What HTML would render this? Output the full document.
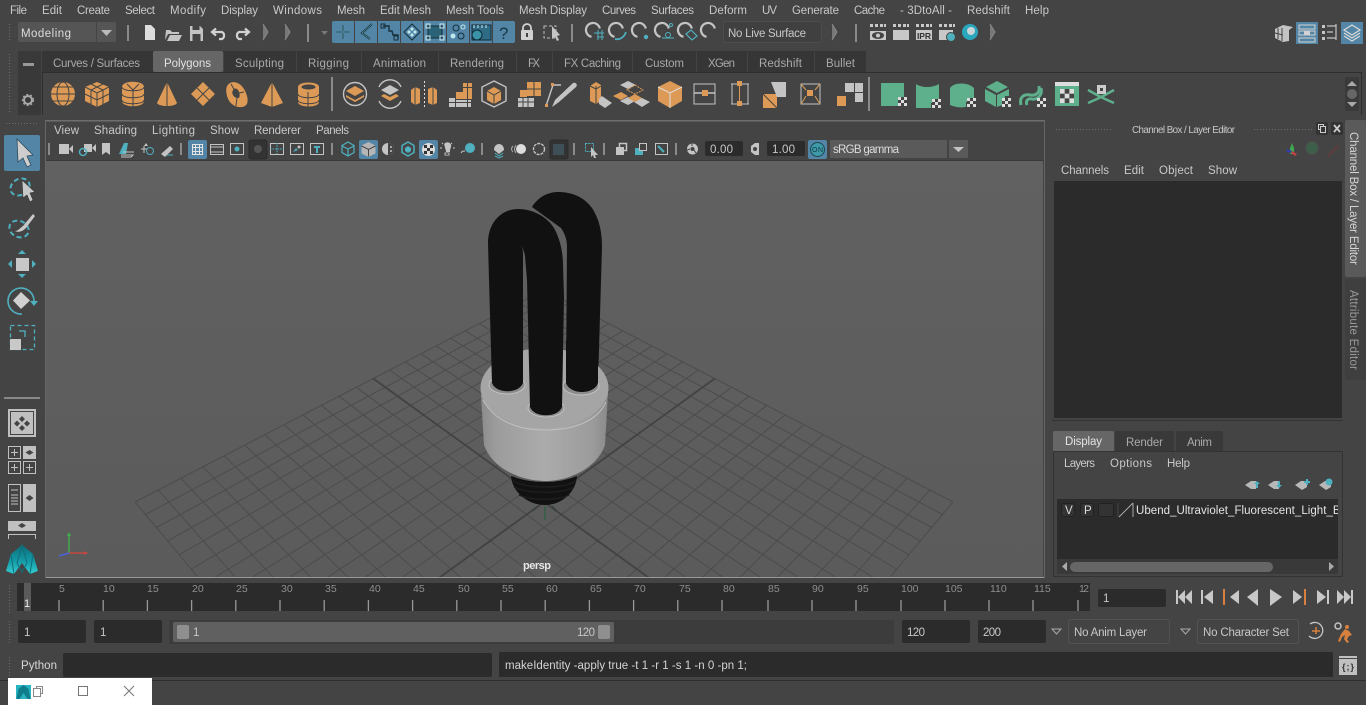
<!DOCTYPE html>
<html><head><meta charset="utf-8"><title>Maya</title>
<style>
html,body{margin:0;padding:0;background:#444;overflow:hidden;width:1366px;height:705px}
#r{width:1366px;height:705px;overflow:hidden;position:relative}
svg{display:block}
text{font-family:"Liberation Sans",sans-serif;font-size:11.5px;fill:#c8c8c8}
.t{fill:#a9a9a9}
.s{font-size:10.5px;fill:#8e8e8e}
.o{fill:#dc9a56}
.k{fill:none;stroke:#444;stroke-width:1}
.w{fill:none;stroke:#c4c4c4;stroke-width:1.4}
.c{fill:none;stroke:#4fb0bf;stroke-width:1.6}
.gn{fill:#5eb08c}
.g{fill:#c4c4c4}
.b{fill:#5285a6}
.sep{fill:#8a8a8a}
.d{fill:#2b2b2b}
</style></head><body><div id="r">
<svg width="1366" height="705" viewBox="0 0 1366 705" xmlns="http://www.w3.org/2000/svg">
<defs>
<clipPath id="vp"><rect x="46" y="161" width="997" height="416"/></clipPath>
<clipPath id="ll"><rect x="1057" y="499" width="281" height="60"/></clipPath>
<linearGradient id="body" x1="0" x2="1" y1="0" y2="0"><stop offset="0" stop-color="#8c8c8c"/><stop offset=".12" stop-color="#9c9c9c"/><stop offset=".5" stop-color="#ababab"/><stop offset=".88" stop-color="#9b9b9b"/><stop offset="1" stop-color="#8a8a8a"/></linearGradient>
<linearGradient id="vbg" x1="0" x2="0" y1="0" y2="1"><stop offset="0" stop-color="#616161"/><stop offset="1" stop-color="#5b5b5b"/></linearGradient>
<linearGradient id="logo" x1="0" x2="0" y1="0" y2="1"><stop offset="0" stop-color="#0c6e7a"/><stop offset=".55" stop-color="#149aa6"/><stop offset="1" stop-color="#35ccd2"/></linearGradient>
<pattern id="dots" width="3" height="3" patternUnits="userSpaceOnUse"><rect width="1" height="1" fill="#6d6d6d"/></pattern>
<g id="chk"><rect width="9" height="9" fill="#444"/><rect width="3" height="3" fill="#ddd"/><rect x="6" width="3" height="3" fill="#ddd"/><rect x="3" y="3" width="3" height="3" fill="#ddd"/><rect y="6" width="3" height="3" fill="#ddd"/><rect x="6" y="6" width="3" height="3" fill="#ddd"/></g>
<path id="gridA" fill="none" stroke="#4c4c4c" stroke-width="1" d="M135 502L544 290M145.500 514.500L556.400 296.400M156.400 527.500L569 302.900M167.600 540.900L582 309.700M179.200 554.700L595.300 316.600M191.300 569.100L609 323.600M210.300 580L622.900 330.900M247.900 580L637.300 338.300M285.500 580L652 345.900M323.300 580L667.100 353.800M360.900 580L682.600 361.800M398.400 580L698.500 370M473.700 580L731.600 387.200M511.300 580L748.900 396.200M548.900 580L766.700 405.400M586.600 580L785 414.900M624.200 580L803.800 424.700M661.800 580L823.200 434.700M699.500 580L843.200 445.100M737.100 580L863.800 455.800M774.700 580L885.100 466.800M812.300 580L907 478.100M850.100 580L929.600 490.100M887.600 580L953 502"/>
<path id="gridB" fill="none" stroke="#424242" stroke-width="1.800" d="M436.100 580L714.800 378.500"/>
<g id="mag"><path d="M-1.500 6.800A7 7 0 1 1 6.800 -1.500" fill="none" stroke="#c4c4c4" stroke-width="2.200"/></g>
<g id="coll"><path d="M0 -8L5 0L0 8" fill="#777" stroke="#8a8a8a"/></g>
</defs>

<rect width="1366" height="705" fill="#444"/>

<!-- menu bar -->
<text x="10" y="14" textLength="17">File</text>
<text x="42" y="14" textLength="20">Edit</text>
<text x="77" y="14" textLength="33">Create</text>
<text x="125" y="14" textLength="30">Select</text>
<text x="170" y="14" textLength="36">Modify</text>
<text x="221" y="14" textLength="37">Display</text>
<text x="273" y="14" textLength="49">Windows</text>
<text x="337" y="14" textLength="28">Mesh</text>
<text x="380" y="14" textLength="51">Edit Mesh</text>
<text x="446" y="14" textLength="58">Mesh Tools</text>
<text x="519" y="14" textLength="68">Mesh Display</text>
<text x="602" y="14" textLength="34">Curves</text>
<text x="651" y="14" textLength="43">Surfaces</text>
<text x="709" y="14" textLength="38">Deform</text>
<text x="762" y="14" textLength="15">UV</text>
<text x="792" y="14" textLength="47">Generate</text>
<text x="854" y="14" textLength="31">Cache</text>
<text x="900" y="14" textLength="52">- 3DtoAll -</text>
<text x="967" y="14" textLength="43">Redshift</text>
<text x="1025" y="14" textLength="24">Help</text>

<!-- status line -->
<rect x="7" y="23" width="5" height="19" fill="url(#dots)"/>
<rect x="18" y="22" width="98" height="20" rx="2" fill="#555"/>
<rect x="96" y="22" width="1" height="20" fill="#444"/>
<text x="21" y="37" style="fill:#dcdcdc" textLength="50">Modeling</text>
<path d="M101 30h11l-5.500 6z" fill="#bbb"/>
<rect x="127" y="25" width="2" height="16" class="sep"/>
<path d="M145 25h6l4 4v11h-10z" style="fill:#ddd"/>
<path d="M166 30h4l2 2h7v2h-11l-3 6zM170 35h12l-3 6h-12z" class="g"/>
<path d="M190 26h10l3 3v12h-13zM192.500 26v4h7v-4M192.500 34h8v7h-8z" class="g" fill-rule="evenodd"/>
<path d="M213 32h9a4 4 0 0 1 0 7h-3M216 28.500l-4 3.500 4 3.500" fill="none" stroke="#d2d2d2" stroke-width="2.200"/>
<path d="M248 32h-9a4 4 0 0 0 0 7h3M245 28.500l4 3.500-4 3.500" fill="none" stroke="#d2d2d2" stroke-width="2.200"/>
<use href="#coll" x="263" y="32"/><use href="#coll" x="285" y="32"/>
<rect x="307" y="24" width="2" height="18" class="sep"/>
<path d="M321 31h7l-3.500 4z" fill="#777"/>
<!-- blue mask buttons -->
<rect x="332" y="21" width="183" height="22" rx="2" class="b"/>
<path d="M354.500 21v22M377.500 21v22M400.500 21v22M423.500 21v22M446.500 21v22M469.500 21v22M492.500 21v22" stroke="#444" stroke-width="1"/>
<path d="M343 25v14M336 32h14" stroke="#14323f" stroke-width="1.600"/><path d="M343 25v14M336 32h14" stroke="#8adbe5" stroke-width=".5"/>
<path d="M372 24l-10 9 8 6" fill="none" stroke="#16303c" stroke-width="2"/><path d="M372 24l-10 9 8 6" fill="none" stroke="#8adbe5" stroke-width=".5"/>
<path d="M383 26h6v5h3l1 4h5v4" fill="none" stroke="#16303c" stroke-width="1.400"/><rect x="381" y="24" width="4" height="4" fill="none" stroke="#16303c"/><rect x="394" y="36" width="4" height="4" fill="none" stroke="#16303c"/>
<path d="M412 24l8 8-8 8-8-8z" fill="none" stroke="#16303c"/><path d="M412 27l2 2-2 2-2-2zM412 33l2 2-2 2-2-2zM409 30l2 2-2 2-2-2zM415 30l2 2-2 2-2-2z" fill="#bfe8ee"/>
<rect x="428" y="26" width="14" height="12" fill="#2c6278" stroke="#102a35"/><path d="M426 24h4v4h-4zM440 24h4v4h-4zM426 36h4v4h-4zM440 36h4v4h-4z" fill="none" stroke="#cfeaf0"/>
<circle cx="456" cy="28" r="3" fill="none" stroke="#16303c"/><circle cx="461" cy="36" r="3" fill="none" stroke="#16303c"/><circle cx="453" cy="36" r="2.500" fill="#bfe8ee"/><circle cx="463" cy="27" r="2" fill="none" stroke="#bfe8ee"/>
<rect x="472" y="25" width="19" height="15" fill="#2f6b85" stroke="#102a35"/><circle cx="477" cy="35" r="5" fill="#3b93a8" stroke="#102a35"/><path d="M474 25v3M478 25v3M482 25v3M486 25v3" stroke="#cfeaf0"/>
<text x="499" y="39" style="font-size:17px;fill:#173845" textLength="10">?</text>
<path d="M523 31v-3a4 4 0 0 1 8 0v3" fill="none" stroke="#d2d2d2" stroke-width="1.800"/><rect x="521" y="30" width="12" height="10" rx="1" fill="#d2d2d2"/><rect x="526" y="33" width="2" height="4" fill="#444"/>
<rect x="544" y="26" width="12" height="12" fill="none" stroke="#bbb" stroke-dasharray="3 2"/><path d="M552 26l8 9-3 1 2 4-2 1-2-4-3 2z" fill="#c4c4c4"/>
<rect x="571" y="24" width="2" height="18" class="sep"/>
<use href="#mag" x="593" y="30"/><path d="M594 33h10M597 37h7M598 30v10M602 30v10" stroke="#4fb0bf" stroke-width="1"/>
<use href="#mag" x="616" y="30"/><path d="M615 39c4 1 9-1 11-7" fill="none" stroke="#4fb0bf" stroke-width="1.800"/>
<use href="#mag" x="639" y="30"/><circle cx="646" cy="37" r="2.200" fill="#4fb0bf"/>
<use href="#mag" x="662" y="30"/><circle cx="668" cy="35" r="2.500" fill="none" stroke="#4fb0bf"/><circle cx="671" cy="25" r="1.500" fill="none" stroke="#4fb0bf"/><path d="M662 38h12" stroke="#4fb0bf"/>
<use href="#mag" x="685" y="30"/><path d="M686 34l5-4 6 6-5 4z" fill="none" stroke="#4fb0bf" stroke-width="1.200"/>
<use href="#mag" x="708" y="30"/>
<rect x="723.500" y="21.500" width="98" height="21" rx="2" fill="#404040" stroke="#4d4d4d"/>
<text x="728" y="37" textLength="78">No Live Surface</text>
<use href="#coll" x="832" y="32"/>
<rect x="855" y="24" width="2" height="18" class="sep"/>
<!-- render icons -->
<g fill="#c8c8c8">
<path d="M870 31h16v9h-16z"/><path d="M870 24h3v3h-3zM875 24h3v3h-3zM880 24h3v3h-3zM884 24h2v3h-2zM893 24h3v3h-3zM898 24h3v3h-3zM903 24h3v3h-3zM907 24h2v3h-2zM916 24h3v3h-3zM921 24h3v3h-3zM926 24h3v3h-3zM930 24h2v3h-2zM939 24h3v3h-3zM944 24h3v3h-3zM949 24h3v3h-3zM953 24h2v3h-2z"/>
<rect x="893" y="30" width="16" height="10"/><rect x="916" y="30" width="16" height="10"/><rect x="939" y="30" width="14" height="10"/>
</g>
<ellipse cx="878" cy="35.500" rx="6" ry="3.500" fill="#444"/><circle cx="878" cy="35.500" r="2" fill="#c8c8c8"/>
<text x="917" y="39" style="font-size:8.500px;fill:#333;font-weight:bold" textLength="14">IPR</text>
<circle cx="951" cy="37" r="4.500" fill="#4fb0bf" stroke="#444"/>
<circle cx="970" cy="32" r="8" fill="#2aa6bd"/><circle cx="971" cy="31" r="4" fill="#c8d4d6"/>
<use href="#coll" x="990" y="32"/>
<!-- right workspace icons -->
<g fill="#c4c4c4"><path d="M1275 29l8-4 10 2-4 3v11l-6 1-8-4z"/></g><path d="M1278 28v11M1282 28v13M1275 33l8 2" stroke="#444"/>
<rect x="1296" y="22" width="22" height="22" class="b"/><path d="M1299 25h16v4h-16zM1299 31h16v4h-16zM1299 38h16v4h-16z" fill="none" stroke="#d2d2d2"/><rect x="1304" y="31" width="6" height="4" fill="#d2d2d2"/>
<path d="M1322 25h3v3h-3zM1322 31h3v3h-3zM1322 37h3v3h-3z" fill="#c4c4c4"/><path d="M1327 26h9M1327 32h6M1327 38h9M1336 24v16" stroke="#c4c4c4" stroke-width="1.200"/>
<rect x="1341" y="22" width="22" height="22" class="b"/><path d="M1352 25l8 5-8 5-8-5zM1344 33l8 5 8-5M1344 36l8 5 8-5" fill="none" stroke="#d8d8d8" stroke-width="1.300"/>

<!-- tabs/shelf -->
<rect x="7" y="52" width="5" height="60" fill="url(#dots)"/>
<rect x="18" y="51" width="23" height="64" fill="#393939"/>
<rect x="23" y="63" width="11" height="3" fill="#999"/>
<circle cx="28" cy="100" r="4" fill="none" stroke="#aaa" stroke-width="2"/><circle cx="28" cy="100" r="5.500" fill="none" stroke="#aaa" stroke-width="1.200" stroke-dasharray="2 2"/>
<rect x="42" y="51" width="824" height="21" fill="#363636"/>
<rect x="153" y="51" width="70" height="21" rx="2" fill="#666"/>
<path d="M296.500 52v20M361.500 52v20M438.500 52v20M516.500 52v20M552.500 52v20M632.500 52v20M696.500 52v20M747.500 52v20M814.500 52v20M223.500 52v20" stroke="#444"/>
<rect x="42" y="72" width="1320" height="1" fill="#2e2e2e"/>
<rect x="42" y="72" width="1" height="43" fill="#2e2e2e"/>
<rect x="1361" y="72" width="1" height="43" fill="#2e2e2e"/>
<text class="t" x="53" y="67" textLength="87">Curves / Surfaces</text>
<text x="164" y="67" textLength="47" style="fill:#e2e2e2">Polygons</text>
<text class="t" x="235" y="67" textLength="49">Sculpting</text>
<text class="t" x="308" y="67" textLength="41">Rigging</text>
<text class="t" x="373" y="67" textLength="53">Animation</text>
<text class="t" x="450" y="67" textLength="54">Rendering</text>
<text class="t" x="528" y="67" textLength="12">FX</text>
<text class="t" x="564" y="67" textLength="57">FX Caching</text>
<text class="t" x="645" y="67" textLength="39">Custom</text>
<text class="t" x="708" y="67" textLength="27">XGen</text>
<text class="t" x="759" y="67" textLength="43">Redshift</text>
<text class="t" x="826" y="67" textLength="29">Bullet</text>

<!-- shelf polygons -->
<g>
<circle class="o" cx="63" cy="94" r="12"/><path class="k" d="M51 94h24M53 87h20M53 101h20"/><ellipse class="k" cx="63" cy="94" rx="6" ry="12"/>
<path class="o" d="M97 82l12 5v14l-12 6-12-6V87z"/><path class="k" d="M85 87l12 6 12-6M97 93v14M91 84l12 6v14M103 84l-12 6v14M85 94l12 6 12-6"/>
<path class="o" d="M122 87c0-7 22-7 22 0v14c0 7-22 7-22 0z"/><path class="k" d="M122 87c0 5 22 5 22 0M122 94c0 5 22 5 22 0M122 100c0 5 22 5 22 0M133 90v17M127 84l6 6 6-6"/>
<path class="o" d="M167 82l10 21c-2 4-18 4-20 0z"/><path class="k" d="M167 82v24"/>
<path class="o" d="M203 82l12 12-12 12-12-12z"/><path class="k" d="M197 88l12 12M209 88l-12 12"/>
<path class="o" d="M230 83c6-3 13 2 16 10s2 13-4 14-13-3-15-11 0-11 3-13z"/><path d="M233 90c2-3 5-1 6 2s1 6-1 6-4-1-5-3-1-3 0-5z" fill="#444"/><path class="k" d="M231 84l4 7M244 92l-5 1M236 106l1-8"/>
<path class="o" d="M272 82l11 21-11 4-11-4z"/><path class="k" d="M272 82v25"/>
<path class="o" d="M298 87c0-6 21-6 21 0v15c0 6-21 6-21 0z"/><ellipse cx="308.500" cy="87" rx="7" ry="2.500" fill="#444"/><path class="k" d="M298 94c0 5 21 5 21 0M298 100c0 5 21 5 21 0M308 92v16"/>
<rect x="331" y="77" width="2" height="34" class="sep"/>
<circle class="w" cx="355" cy="94" r="11.500"/><path class="o" d="M355 86l9 5-9 5-9-5z"/><path class="o" d="M346 95l9 5 9-5v2l-9 5-9-5z"/>
<path class="w" d="M379 87a12 12 0 0 1 22 0M379 101a12 12 0 0 0 22 0"/><path class="g" d="M390 85l9 5-9 5-9-5z"/><path class="o" d="M381 96l9 5 9-5-3-2-6 3-6-3z"/>
<path class="o" d="M411 90l4-3 5 2v14l-5 2-4-3zM428 89l5-2 4 3v13l-4 2-5-2z"/><path class="k" d="M415 87v18M433 87v18"/><path d="M424.500 81v28" stroke="#ddd" stroke-dasharray="2 2"/>
<path class="o" d="M463 83h9v9h-9zM456 92h7v7h-7zM463 92h9v7h-9z"/><path class="g" d="M449 98h6v9h-6zM456 100h7v7h-7zM463 100h8v7h-8z"/><path class="k" d="M467.500 83v24M463 87.500h9M449 102.500h22"/>
<path class="w" d="M494 81l12 6v14l-12 6-12-6V87z"/><path class="o" d="M494 87l7 4v9l-7 4-7-4v-9z"/><path class="k" d="M487 91l7 4 7-4M494 95v9"/>
<path class="o" d="M527 82h7v7h-7zM534 82h7v7h-7zM527 89h7v7h-7zM534 89h7v7h-7zM520 90h7v7h-7z"/><path class="k" d="M534 82v14M527 89h14"/><path class="g" d="M518 98h16v9h-16z"/><path class="k" d="M523 98v9M528 98v9M518 102h16"/>
<path class="w" d="M553 85l-7 21M553 85h8"/><rect class="o" x="551" y="83" width="3" height="3"/><rect class="o" x="545" y="104" width="3" height="3"/><path class="g" d="M559 102l-7 5 3-7 18-17c3-1 5 2 3 4z"/>
<path class="o" d="M590 86l6-4 5 3v16l-5 3-6-3z"/><path class="g" d="M602 96l10 7-7 5-6-4v-5z"/><path class="k" d="M596 86v18M590 86l6 3 5-3"/>
<path class="g" d="M628 81l8 4-8 4-8-4zM642 98l8 4-8 5-8-5zM628 97l7 4-7 4-8-4z"/><path class="o" d="M635 94l7 4-7 4-7-4zM621 92l7 4-7 4-8-4z"/><path d="M635 85l8 5-8 4-8-4z" fill="none" stroke="#dc9a56" stroke-dasharray="2 1"/>
<path class="o" d="M670 81l12 6v14l-12 7-12-7V87z"/><path d="M658 87l12 6 12-6M670 93v15" fill="none" stroke="#ddd"/>
<rect class="w" x="694" y="84" width="21" height="20" style="stroke-width:1"/><rect class="o" x="702" y="90" width="6" height="6"/><path class="w" d="M694 93h8M708 93h7"/>
<path class="w" d="M731 84h18M731 104h18M732 84v20M748 84v20" style="stroke-width:1"/><rect class="o" x="737" y="81" width="5" height="5"/><rect class="o" x="737" y="101" width="5" height="5"/><path d="M739.500 86v15" stroke="#dc9a56"/>
<path class="o" d="M763 94h14v14h-14z"/><path class="k" d="M763 94l14 14"/><path class="g" d="M771 82h15v15h-9z"/>
<rect class="w" x="801" y="84" width="19" height="20" style="stroke-width:1"/><rect class="o" x="807" y="90" width="6" height="6"/><path class="o" d="M801 84l5 6M820 84l-5 6M801 104l5-8M820 104l-5-8" style="stroke:#dc9a56"/>
<path class="g" d="M845 83h9v9h-9zM855 83h8v9h-8zM855 93h8v9h-8z"/><path class="o" d="M837 96h9v10h-9z"/>
<rect x="868" y="77" width="2" height="34" class="sep"/>
<!-- green shelf -->
<path class="gn" d="M881 83h23v19h-6v4h-17z"/>
<use href="#chk" x="898" y="97"/>
<path class="gn" d="M916 84c6 4 16 4 23 0v19h-8v5h-15z"/><use href="#chk" x="932" y="99"/>
<path class="gn" d="M950 88c4-6 18-6 24 0v14h-8v5c-6 1-11 0-16-2z"/><use href="#chk" x="967" y="98"/>
<path class="gn" d="M997 81l11 6-11 6-11-6zM985 89l11 6v12l-11-6zM1009 89v7h-4v8l-8 3V95z"/><use href="#chk" x="1002" y="98"/>
<path d="M1021 105c-2-8 3-11 9-10s10-2 9-9M1027 105c-2-5 2-7 5-6s11-2 9-11" fill="none" stroke="#5eb08c" stroke-width="3"/><use href="#chk" x="1037" y="98"/>
<rect class="gn" x="1055" y="82" width="24" height="24"/><rect x="1055" y="82" width="24" height="4" fill="#ddd"/><g transform="translate(1060,89) scale(1.560)"><use href="#chk"/></g>
<path d="M1088 90l9 5 4 2 4-2 9-5M1088 103l9-4 4-2 4 2 9 4" fill="none" stroke="#5eb08c" stroke-width="2.500"/><rect x="1097" y="85" width="9" height="9" fill="#ccc"/><rect x="1100" y="88" width="3" height="3" fill="#444"/>
<rect x="1345" y="77" width="14" height="34" fill="#3a3a3a"/><path d="M1347 86l5-5 5 5z" fill="#aaa"/><ellipse cx="1352" cy="94" rx="5" ry="5" fill="#666"/><path d="M1347 102l5 5 5-5z" fill="#aaa"/>
</g>

<!-- left toolbar -->
<rect x="4" y="123" width="35" height="3" fill="url(#dots)"/>
<rect x="4" y="135" width="36" height="36" rx="2" class="b"/>
<path d="M17 139l16 16-6 1 4 9-4 2-4-9-5 4z" fill="#cdcdcd" stroke="#2f4a5c" stroke-width=".8"/>
<ellipse cx="20" cy="187" rx="10" ry="8" transform="rotate(-30 20 187)" fill="none" stroke="#4fb0bf" stroke-width="2" stroke-dasharray="5 3"/>
<path d="M22 180l13 12-5 1 3 7-3 2-3-7-4 3z" fill="#c8c8c8" stroke="#333" stroke-width=".6"/>
<ellipse cx="19" cy="229" rx="10" ry="8" transform="rotate(25 19 229)" fill="none" stroke="#4fb0bf" stroke-width="2" stroke-dasharray="5 3"/>
<path d="M15 231c3 0 5-3 8-5l10-12 2 2-9 12c-3 3-7 5-11 3z" fill="#c8c8c8"/>
<rect x="16" y="258" width="13" height="13" fill="#c8c8c8"/><path d="M22 250l4 4h-8zM22 278l4-4h-8zM8 264l4-4v8zM36 264l-4-4v8z" fill="#4fb0bf"/>
<path d="M21 292l9 8.500-9 8.500-8-8.500z" fill="#d0d0d0"/>
<path d="M22 314A13 13 0 1 1 34 301" fill="none" stroke="#4fb0bf" stroke-width="1.600"/><path d="M30 301h8l-4 5z" fill="#4fb0bf"/>
<rect x="10.500" y="325.500" width="24" height="24" fill="none" stroke="#4fb0bf" stroke-width="1.300" stroke-dasharray="4 3"/>
<rect x="10" y="339" width="11" height="11" fill="#c8c8c8"/><path d="M19 331h6v6" fill="none" stroke="#4fb0bf" stroke-width="1.300"/>
<rect x="4" y="397" width="36" height="2" fill="#888"/>
<rect x="8" y="409" width="28" height="28" fill="#c0c0c0"/><rect x="10.500" y="411.500" width="23" height="23" fill="none" stroke="#444"/>
<path d="M22 416l3 3-3 3-3-3zM22 425l3 3-3 3-3-3zM17 420.500l3 3-3 3-3-3zM27 420.500l3 3-3 3-3-3z" fill="#444"/>
<rect x="8.500" y="446.500" width="12" height="12" fill="none" stroke="#c0c0c0"/><rect x="23" y="446" width="13" height="13" fill="#c0c0c0"/><rect x="8.500" y="461.500" width="12" height="12" fill="none" stroke="#c0c0c0"/><rect x="23.500" y="461.500" width="12" height="12" fill="none" stroke="#c0c0c0"/>
<path d="M11 452.500h7M14.500 449v7M11 467.500h7M14.500 464v7M26 467.500h7M29.500 464v7" stroke="#c0c0c0"/><path d="M29.500 450l4 2.500-4 2.500-4-2.500z" fill="#444"/>
<rect x="8.500" y="484.500" width="12" height="27" fill="none" stroke="#c0c0c0"/><rect x="23" y="484" width="13" height="28" fill="#c0c0c0"/><path d="M11 490h7M11 495h7M11 498h7M11 501h7M11 504h7" stroke="#c0c0c0"/><path d="M29.500 495l4 3-4 3-4-3z" fill="#444"/>
<rect x="8" y="521" width="28" height="10" fill="#c0c0c0"/><path d="M22 523l4 2.500-4 2.500-4-2.500z" fill="#444"/>
<path d="M8.500 535v4M35.500 535v4M8 534.500h28" stroke="#c0c0c0"/>
<path d="M22 545L33 554L38 571L30 574L22 563L14 574L6 571L11 554Z" fill="url(#logo)"/><path d="M22 545L17 563L22 572L27 563ZM11 554L14 574M33 554L30 574" fill="none" stroke="#0f6f7a" stroke-width="1"/>

<!-- viewport -->
<rect x="45" y="120" width="999" height="458" fill="#444"/>
<rect x="45" y="120" width="999" height="1.500" fill="#6e6e6e"/>
<rect x="45" y="160" width="999" height="1" fill="#3a3a3a"/>
<text x="54" y="134" textLength="25">View</text>
<text x="94" y="134" textLength="43">Shading</text>
<text x="152" y="134" textLength="43">Lighting</text>
<text x="210" y="134" textLength="29">Show</text>
<text x="254" y="134" textLength="47">Renderer</text>
<text x="316" y="134" textLength="33">Panels</text>

<!-- panel toolbar -->
<g fill="#8a8a8a"><rect x="48" y="143" width="2" height="12"/><rect x="180" y="143" width="2" height="12"/><rect x="331" y="143" width="2" height="12"/><rect x="481" y="143" width="2" height="12"/><rect x="573" y="143" width="2" height="12"/><rect x="603" y="143" width="2" height="12"/><rect x="675" y="143" width="2" height="12"/></g>
<rect x="59" y="144" width="10" height="10" fill="#c4c4c4"/><path d="M69 149l4-4v8z" fill="#c4c4c4"/>
<rect x="84" y="144" width="8" height="8" fill="#c4c4c4"/><path d="M92 148l4-4v8z" fill="#c4c4c4"/><circle cx="83" cy="152" r="3.500" fill="none" stroke="#4fb0bf" stroke-width="1.500"/>
<path d="M102 143h8v12l-4-3-4 3z" fill="#c4c4c4"/>
<path d="M119 154l5-11h4l-2 11z" fill="#4fb0bf"/><path d="M121 155h12l-2 2h-10M123 152h11" fill="none" stroke="#c4c4c4"/>
<path d="M141 149h6M144 146v7" stroke="#c4c4c4"/><circle cx="150" cy="151" r="3.500" fill="none" stroke="#4fb0bf"/><path d="M146 143l-2 3h4z" fill="#c4c4c4"/>
<path d="M161 154l9-8 3 3-8 8z" fill="#c4c4c4"/><path d="M167 155h6" stroke="#4fb0bf"/>
<rect x="188" y="140" width="19" height="19" rx="2" class="b"/><rect x="192.500" y="144.500" width="10" height="10" fill="none" stroke="#e4e4e4"/><path d="M195.500 144v11M199.500 144v11M192 147.500h11M192 151.500h11" stroke="#e4e4e4"/>
<rect x="210.500" y="144.500" width="13" height="10" fill="none" stroke="#c4c4c4"/><path d="M210 147h14M210 152h14" stroke="#c4c4c4"/>
<rect x="230.500" y="143.500" width="13" height="11" fill="none" stroke="#c4c4c4"/><circle cx="237" cy="149" r="2.500" fill="#4fb0bf"/>
<rect x="249" y="140" width="18" height="19" rx="2" fill="#333" stroke="#2b2b2b"/><circle cx="258" cy="149" r="4" fill="#555"/>
<rect x="270.500" y="143.500" width="13" height="11" fill="none" stroke="#c4c4c4"/><path d="M270 149h14M277 143v11" stroke="#4fb0bf" stroke-dasharray="1.500 1"/>
<rect x="290.500" y="143.500" width="13" height="11" fill="none" stroke="#c4c4c4"/><path d="M293 152l3-4 2 2z" fill="#4fb0bf"/><circle cx="299" cy="147" r="1.500" fill="#c4c4c4"/>
<rect x="310.500" y="143.500" width="13" height="11" fill="none" stroke="#c4c4c4"/><path d="M314 146h6v2h-2v5h-2v-5h-2z" fill="#4fb0bf"/>
<path d="M348 142l6 3.500v7l-6 3.500-6-3.500v-7zM342 146l6 3 6-3M348 149v7" fill="none" stroke="#4fb0bf" stroke-width="1.200"/>
<rect x="359" y="140" width="19" height="19" rx="2" class="b"/><path d="M368.500 142l7 3.500v8l-7 3.500-7-3.500v-8z" fill="#b5b5b5"/><path d="M361.500 146l7 3.500 7-3.500M368.500 149.500v7" fill="none" stroke="#444"/>
<circle cx="388" cy="149" r="6" fill="#c4c4c4"/><path d="M388 143a6 6 0 0 1 0 12z" fill="#444"/><circle cx="391" cy="147" r="1" fill="#c4c4c4"/><circle cx="391" cy="151" r="1" fill="#c4c4c4"/>
<path d="M408 142l6 3.500v7l-6 3.500-6-3.500v-7z" fill="none" stroke="#4fb0bf" stroke-width="1.500"/><path d="M408 146l3 2v3l-3 2-3-2v-3z" fill="#4fb0bf"/>
<rect x="419" y="140" width="19" height="19" rx="2" class="b"/><circle cx="428.500" cy="149.500" r="6.500" fill="#ddd"/><path d="M424 145h3v3h-3zM430 145h3v3h-3zM427 148h3v3h-3zM424 151h3v3h-3zM430 151h3v3h-3z" fill="#333"/>
<path d="M445 143c4-2 7 1 6 4-.5 2-1 2-1 5h-4c0-3-1-3-1-5-1-2-1-3 0-4z" fill="#c4c4c4"/><path d="M445 153h4v2h-4zM440 148h2M453 148h2M442 143l1 1M452 143l-1 1" stroke="#c4c4c4"/>
<circle cx="470" cy="148" r="5" fill="#4fb0bf"/><path d="M461 153c1-2 2-2 4-2" stroke="#c4c4c4" fill="none"/>
<path d="M494 150c0-8 10-8 10 0l-5 4z" fill="#c4c4c4"/><path d="M495 153l4 3 4-3M495 156l4 2 4-2" stroke="#4fb0bf" fill="none"/>
<circle cx="521" cy="149" r="5" fill="#ddd"/><path d="M513 146c-2 2-2 4 0 6M516 145c-2 3-2 5 0 8" fill="none" stroke="#aaa"/>
<circle cx="539" cy="149" r="5.500" fill="none" stroke="#c4c4c4" stroke-dasharray="3 1" stroke-width="1.400"/>
<rect x="550" y="140" width="18" height="19" rx="2" fill="#333" stroke="#2b2b2b"/><rect x="553" y="144" width="11" height="11" fill="#3e4f57"/>
<rect x="585.500" y="143.500" width="8" height="8" fill="none" stroke="#4fb0bf" stroke-dasharray="2 1"/><path d="M591 147l7 8-3 0 1 3-2 0-1-3-2 2z" fill="#c4c4c4"/>
<path d="M616 147h8v8h-8z" fill="#c4c4c4"/><rect x="619.500" y="143.500" width="7" height="7" fill="none" stroke="#c4c4c4" stroke-width="1.500"/>
<rect x="635" y="148" width="8" height="7" fill="#4fb0bf"/><rect x="639.500" y="143.500" width="7" height="7" fill="#444" stroke="#c4c4c4"/>
<rect x="655.500" y="143.500" width="12" height="11" fill="none" stroke="#c4c4c4"/><path d="M658 146l6 6" stroke="#4fb0bf" stroke-width="2"/>
<circle cx="692.500" cy="149" r="5.500" fill="#c4c4c4"/><circle cx="692.500" cy="149" r="2" fill="#444"/><path d="M692 143v3M687 150l3-1M696 153l-2-3" stroke="#444"/>
<rect x="705" y="141" width="38" height="15" rx="2" class="d"/><text x="710" y="153" textLength="23">0.00</text>
<path d="M755 143h4v12h-4l-4-3v-6z" fill="#c4c4c4"/><circle cx="755" cy="149" r="2" fill="#444"/>
<rect x="767" y="141" width="38" height="15" rx="2" class="d"/><text x="772" y="153" textLength="23">1.00</text>
<rect x="808" y="140" width="19" height="19" rx="2" class="b"/><circle cx="817.500" cy="149.500" r="7" fill="#3e9aa8" stroke="#1e4653"/><text x="812" y="152" style="font-size:7px;fill:#143540" textLength="11">ON</text>
<rect x="830" y="140" width="117" height="18" fill="#5a5a5a"/><rect x="949" y="140" width="19" height="18" rx="1" fill="#5a5a5a"/>
<text x="833" y="153" style="fill:#dcdcdc;font-size:11.500px" textLength="66">sRGB gamma</text>
<path d="M953 147h11l-5.500 5z" fill="#c4c4c4"/>

<!-- 3D view -->
<rect x="46" y="161" width="997" height="416" fill="url(#vbg)"/>
<g clip-path="url(#vp)">
<use href="#gridA"/><use href="#gridA" transform="matrix(-1 0 0 1 1088 0)"/>
<use href="#gridB"/><use href="#gridB" transform="matrix(-1 0 0 1 1088 0)"/>

<!-- back tube -->
<path d="M566 383L567 247C567 240 565 234 561 228L532 207C538 197 548 192 558 192C572 192 584 197 592 208C600 220 602 234 602 247L598 383C594 396 570 396 566 383Z" fill="#111"/>
<!-- base top / body -->
<path d="M481 395L484 445C492 468 520 481 545 481C572 481 598 466 605 445L608 393Z" fill="url(#body)"/>
<ellipse cx="544.500" cy="388" rx="64" ry="40" fill="#a5a5a5"/>
<path d="M483 400C495 422 520 430 545 430C572 430 597 422 606 402" fill="none" stroke="#c0c0c0" stroke-width="1"/>
<!-- rings -->
<ellipse cx="507" cy="385" rx="18" ry="9" fill="#8c8c8c" stroke="#c2c2c2"/>
<ellipse cx="581" cy="386" rx="18" ry="9" fill="#8c8c8c" stroke="#c2c2c2"/>
<ellipse cx="546" cy="408" rx="18" ry="9" fill="#8c8c8c" stroke="#c2c2c2"/>
<!-- redraw back tube foot over base -->
<path d="M566 340L598 340L598 383C594 395 570 395 566 383Z" fill="#111"/>
<!-- front tube -->
<path d="M492 383L489 280L488 243C488 222 502 209 518 209C534 209 550 218 556 232C561 243 563 254 563 265L564 297L562 407C558 418 534 418 530 407L527 280L525 256C524 250 522 247 520 245C522 247 523 250 523 253L523 383C519 394 496 394 492 383Z" fill="#111"/>
<!-- socket -->
<path d="M511 476C512 492 528 505 545 505C562 505 576 492 577 476C564 481 555 482 545 482C532 482 522 480 511 476Z" fill="#111"/>
<path d="M514 487C528 494 562 494 574 487M519 495C532 501 556 501 569 495M513 481C528 489 562 489 576 481" fill="none" stroke="#1e1e1e" stroke-width="1.500"/>
<!-- origin -->
<path d="M545 506v14" stroke="#1f5f3a"/><path d="M538 506l-5 5M552 506l5 5" stroke="#2f3f36"/>
</g>
<text x="523" y="569" style="font-size:11px;fill:#e6e6e6;font-weight:bold" textLength="28">persp</text>
<!-- axes -->
<path d="M69 553V535" stroke="#3fae4f" stroke-width="1.400"/><path d="M69 553H85" stroke="#c8463f" stroke-width="1.400"/><path d="M69 553L59 556" stroke="#4a60dc" stroke-width="1.600"/>
<path d="M67 536l2-4 2 4z" fill="#3fae4f"/><path d="M84 551l4 2-4 2z" fill="#c8463f"/>
<rect x="45" y="577" width="999" height="1.500" fill="#9a9a9a"/>
<rect x="1044" y="120" width="1" height="458" fill="#666"/>
<rect x="45" y="120" width="1" height="458" fill="#666"/>

<!-- right panel -->
<rect x="1054" y="128" width="58" height="3" fill="url(#dots)"/>
<rect x="1254" y="128" width="58" height="3" fill="url(#dots)"/>
<text x="1132" y="133" style="font-size:9.800px" textLength="103">Channel Box / Layer Editor</text>
<rect x="1316" y="122" width="12" height="13" rx="2" fill="#333"/><rect x="1331" y="122" width="12" height="13" rx="2" fill="#333"/>
<rect x="1318.500" y="124.500" width="5" height="5" fill="none" stroke="#ccc"/><rect x="1320.500" y="126.500" width="5" height="6" fill="#333" stroke="#ccc"/>
<path d="M1334 125l6 7M1340 125l-6 7" stroke="#ccc" stroke-width="1.800"/>
<path d="M1292 143l2 5v6h-4v-6z" fill="#3fa84f"/><path d="M1292 151l-5-2-1 2 5 2z" fill="#2e3fb0"/><path d="M1292 151l5 3-2 2-4-3z" fill="#c0403f"/>
<circle cx="1312" cy="148" r="6.500" fill="#3d5e48" stroke="#4a4a4a"/>
<path d="M1328 156l10-10" stroke="#6a3a3a" stroke-width="1.500"/>
<text x="1061" y="174" textLength="48">Channels</text>
<text x="1124" y="174" textLength="20">Edit</text>
<text x="1159" y="174" textLength="34">Object</text>
<text x="1208" y="174" textLength="29">Show</text>
<rect x="1054" y="181" width="288" height="237" fill="#2b2b2b"/>
<rect x="1052" y="420" width="291" height="1" fill="#333"/>
<rect x="1053" y="431" width="61" height="21" rx="2" fill="#666"/>
<rect x="1115" y="431" width="59" height="21" rx="2" fill="#393939"/>
<rect x="1176" y="431" width="47" height="21" rx="2" fill="#393939"/>
<text x="1065" y="445" style="fill:#e2e2e2" textLength="37">Display</text>
<text class="t" x="1126" y="446" textLength="37">Render</text>
<text class="t" x="1187" y="446" textLength="25">Anim</text>
<rect x="1053.500" y="451.500" width="289" height="125" fill="#444" stroke="#333"/>
<text x="1064" y="467" textLength="31">Layers</text>
<text x="1110" y="467" textLength="42">Options</text>
<text x="1167" y="467" textLength="23">Help</text>
<g fill="#b8b8b8"><path d="M1245 485l6-4h5v8h-5z"/><path d="M1268 485l6-4h5v8h-5z"/><path d="M1295 485l6-4h6v6l-5 3z"/><path d="M1319 485l6-4h6v6l-5 3z"/></g>
<path d="M1257 481l3 3h-2v4h-2v-4h-2z" fill="#4fb0bf"/><path d="M1279 488l3-3h-2v-4h-2v4h-2z" fill="#4fb0bf"/>
<path d="M1307 479v6M1304 482h6" stroke="#4fb0bf" stroke-width="2"/><circle cx="1329" cy="482" r="3.500" fill="#4fb0bf"/>
<rect x="1057" y="499" width="281" height="60" class="d"/>
<rect x="1061.500" y="503.500" width="13" height="13" rx="2" fill="#333" stroke="#222"/><text x="1065" y="514" style="fill:#ddd" textLength="7">V</text>
<rect x="1080.500" y="503.500" width="13" height="13" rx="2" fill="#333" stroke="#222"/><text x="1084" y="514" style="fill:#ddd" textLength="7">P</text>
<rect x="1098.500" y="503.500" width="15" height="13" rx="2" fill="#333" stroke="#222"/>
<path d="M1119 517l14-14M1133 503v14M1118 503v14" stroke="#aaa" fill="none"/><path d="M1118 503v14" stroke="#444"/>
<g clip-path="url(#ll)"><text x="1136" y="514" style="fill:#e4e4e4;font-size:11.500px" textLength="220">Ubend_Ultraviolet_Fluorescent_Light_Bulb</text></g>
<rect x="1057" y="559" width="281" height="15" fill="#393939"/>
<path d="M1067 562l-5 4.500 5 4.500z" fill="#aaa"/><path d="M1329 562l5 4.500-5 4.500z" fill="#aaa"/>
<rect x="1070" y="562" width="203" height="10" rx="5" fill="#666"/>
<!-- vertical tabs -->
<rect x="1345" y="120" width="21" height="157" rx="2" fill="#5a5a5a"/>
<rect x="1345" y="279" width="21" height="101" rx="2" fill="#3f3f3f"/>
<text transform="translate(1350,132) rotate(90)" textLength="133" style="fill:#d6d6d6;font-size:11.500px">Channel Box / Layer Editor</text>
<text transform="translate(1350,290) rotate(90)" textLength="80" style="fill:#9a9a9a;font-size:11.500px">Attribute Editor</text>

<!-- timeline -->
<rect x="0" y="578" width="1366" height="5" fill="#444"/>
<rect x="7" y="583" width="5" height="30" fill="url(#dots)"/>
<rect x="17" y="583" width="1073" height="28" class="d"/>
<rect x="24" y="583" width="7" height="28" fill="#5a5a5a"/>
<text x="24" y="607" style="fill:#eee;font-size:11px">1</text>
<path stroke="#999" stroke-width="1.300" d="M59 600v11M103.200 600v11M147.400 600v11M191.600 600v11M235.800 600v11M280 600v11M324.200 600v11M368.400 600v11M412.600 600v11M456.800 600v11M501 600v11M545.200 600v11M589.400 600v11M633.600 600v11M677.800 600v11M768 600v11M812 600v11M856 600v11M901 600v11M945 600v11M989 600v11M1033 600v11M1078 600v11M722 600v11"/>
<g>
<text class="s" x="59" y="592">5</text><text class="s" x="103" y="592">10</text><text class="s" x="147" y="592">15</text><text class="s" x="192" y="592">20</text><text class="s" x="236" y="592">25</text><text class="s" x="281" y="592">30</text><text class="s" x="325" y="592">35</text><text class="s" x="369" y="592">40</text><text class="s" x="413" y="592">45</text><text class="s" x="458" y="592">50</text><text class="s" x="502" y="592">55</text><text class="s" x="546" y="592">60</text><text class="s" x="590" y="592">65</text><text class="s" x="634" y="592">70</text><text class="s" x="679" y="592">75</text><text class="s" x="723" y="592">80</text><text class="s" x="768" y="592">85</text><text class="s" x="812" y="592">90</text><text class="s" x="857" y="592">95</text><text class="s" x="901" y="592">100</text><text class="s" x="945" y="592">105</text><text class="s" x="990" y="592">110</text><text class="s" x="1034" y="592">115</text><text class="s" x="1079" y="592" textLength="10">12</text>
</g>
<rect x="1098" y="589" width="68" height="18" rx="2" class="d"/>
<text x="1103" y="602">1</text>
<g fill="#c8c8c8">
<rect x="1176" y="590" width="2" height="14"/><path d="M1185 590l-7 7 7 7zM1192 590l-7 7 7 7z"/>
<rect x="1201" y="590" width="2" height="14"/><path d="M1213 590l-9 7 9 7z"/>
<path d="M1239 590l-9 7 9 7z"/><rect x="1223" y="589" width="2" height="16" style="fill:#d8803f"/>
<path d="M1258 589l-11 8 11 9z"/>
<path d="M1270 589l12 8-12 9z"/>
<path d="M1293 590l9 7-9 7z"/><rect x="1304" y="589" width="2" height="16" style="fill:#d8803f"/>
<path d="M1317 590l9 7-9 7z"/><rect x="1327" y="590" width="2" height="14"/>
<path d="M1337 590l7 7-7 7zM1344 590l7 7-7 7z"/><rect x="1351" y="590" width="2" height="14"/>
</g>

<!-- range -->
<rect x="7" y="619" width="5" height="26" fill="url(#dots)"/>
<rect x="18" y="620" width="68" height="23" rx="2" class="d"/><text x="24" y="636">1</text>
<rect x="94" y="620" width="68" height="23" rx="2" class="d"/><text x="100" y="636">1</text>
<rect x="169" y="620" width="725" height="24" fill="#3c3c3c"/>
<rect x="173" y="622" width="441" height="20" rx="2" fill="#606060"/>
<rect x="177" y="625" width="12" height="14" rx="2" fill="#8f8f8f"/><rect x="598" y="625" width="12" height="14" rx="2" fill="#8f8f8f"/>
<text x="193" y="636">1</text><text x="577" y="636" textLength="18">120</text>
<rect x="902" y="620" width="68" height="23" rx="2" class="d"/><text x="907" y="636" textLength="18">120</text>
<rect x="978" y="620" width="68" height="23" rx="2" class="d"/><text x="983" y="636" textLength="18">200</text>
<path d="M1052 629h9l-4.500 5z" fill="none" stroke="#aaa"/>
<rect x="1068.500" y="619.500" width="101" height="24" rx="2" fill="#444" stroke="#525252"/>
<text x="1074" y="636" textLength="73">No Anim Layer</text>
<path d="M1181 629h9l-4.500 5z" fill="none" stroke="#aaa"/>
<rect x="1197.500" y="619.500" width="101" height="24" rx="2" fill="#444" stroke="#525252"/>
<text x="1203" y="636" textLength="86">No Character Set</text>
<path d="M1310 624a8 8 0 1 1-1 12" fill="none" stroke="#c4c4c4" stroke-width="1.300"/><path d="M1316 627v7M1312 631h8" stroke="#d8803f" stroke-width="1.500"/>
<circle cx="1338" cy="626" r="3" fill="none" stroke="#c4c4c4" stroke-width="1.500"/>
<path d="M1345 629l4 2 3 4-3 1-2 3 2 3-2 1-3-4 1-4-3 2-2 5-2-1 3-7z" fill="#d8803f"/><circle cx="1347" cy="627" r="2" fill="#d8803f"/>

<!-- command line -->
<rect x="7" y="655" width="5" height="24" fill="url(#dots)"/>
<text x="21" y="669" style="fill:#d8d8d8" textLength="36">Python</text>
<rect x="63" y="653" width="429" height="24" rx="2" class="d"/>
<rect x="499" y="652" width="834" height="25" rx="1" class="d"/>
<text x="505" y="669" textLength="242" style="fill:#d4d4d4">makeIdentity -apply true -t 1 -r 1 -s 1 -n 0 -pn 1;</text>
<rect x="1339" y="656" width="18" height="19" fill="#c0c0c0"/>
<path d="M1339 658.500h18" stroke="#444"/>
<text x="1342" y="670" style="font-size:9px;fill:#333;font-weight:bold" textLength="12">{;}</text>
<rect x="0" y="680" width="1366" height="1" fill="#2e2e2e"/>
<!-- window control box -->
<rect x="8" y="678" width="144" height="27" fill="#fff"/>
<rect x="16" y="685" width="15" height="14" fill="#27b3c0"/><path d="M23.500 685l5 4 2 10h-3l-4-6-4 6h-3l2-10z" fill="#0f7d8c"/>
<rect x="36.500" y="686.500" width="6" height="7" fill="none" stroke="#888"/><rect x="33.500" y="688.500" width="7" height="8" fill="#fff" stroke="#888"/>
<rect x="78.500" y="686.500" width="9" height="9" fill="none" stroke="#777"/>
<path d="M124 686l10 10M134 686l-10 10" stroke="#777" stroke-width="1"/>
</svg>
</div></body></html>
